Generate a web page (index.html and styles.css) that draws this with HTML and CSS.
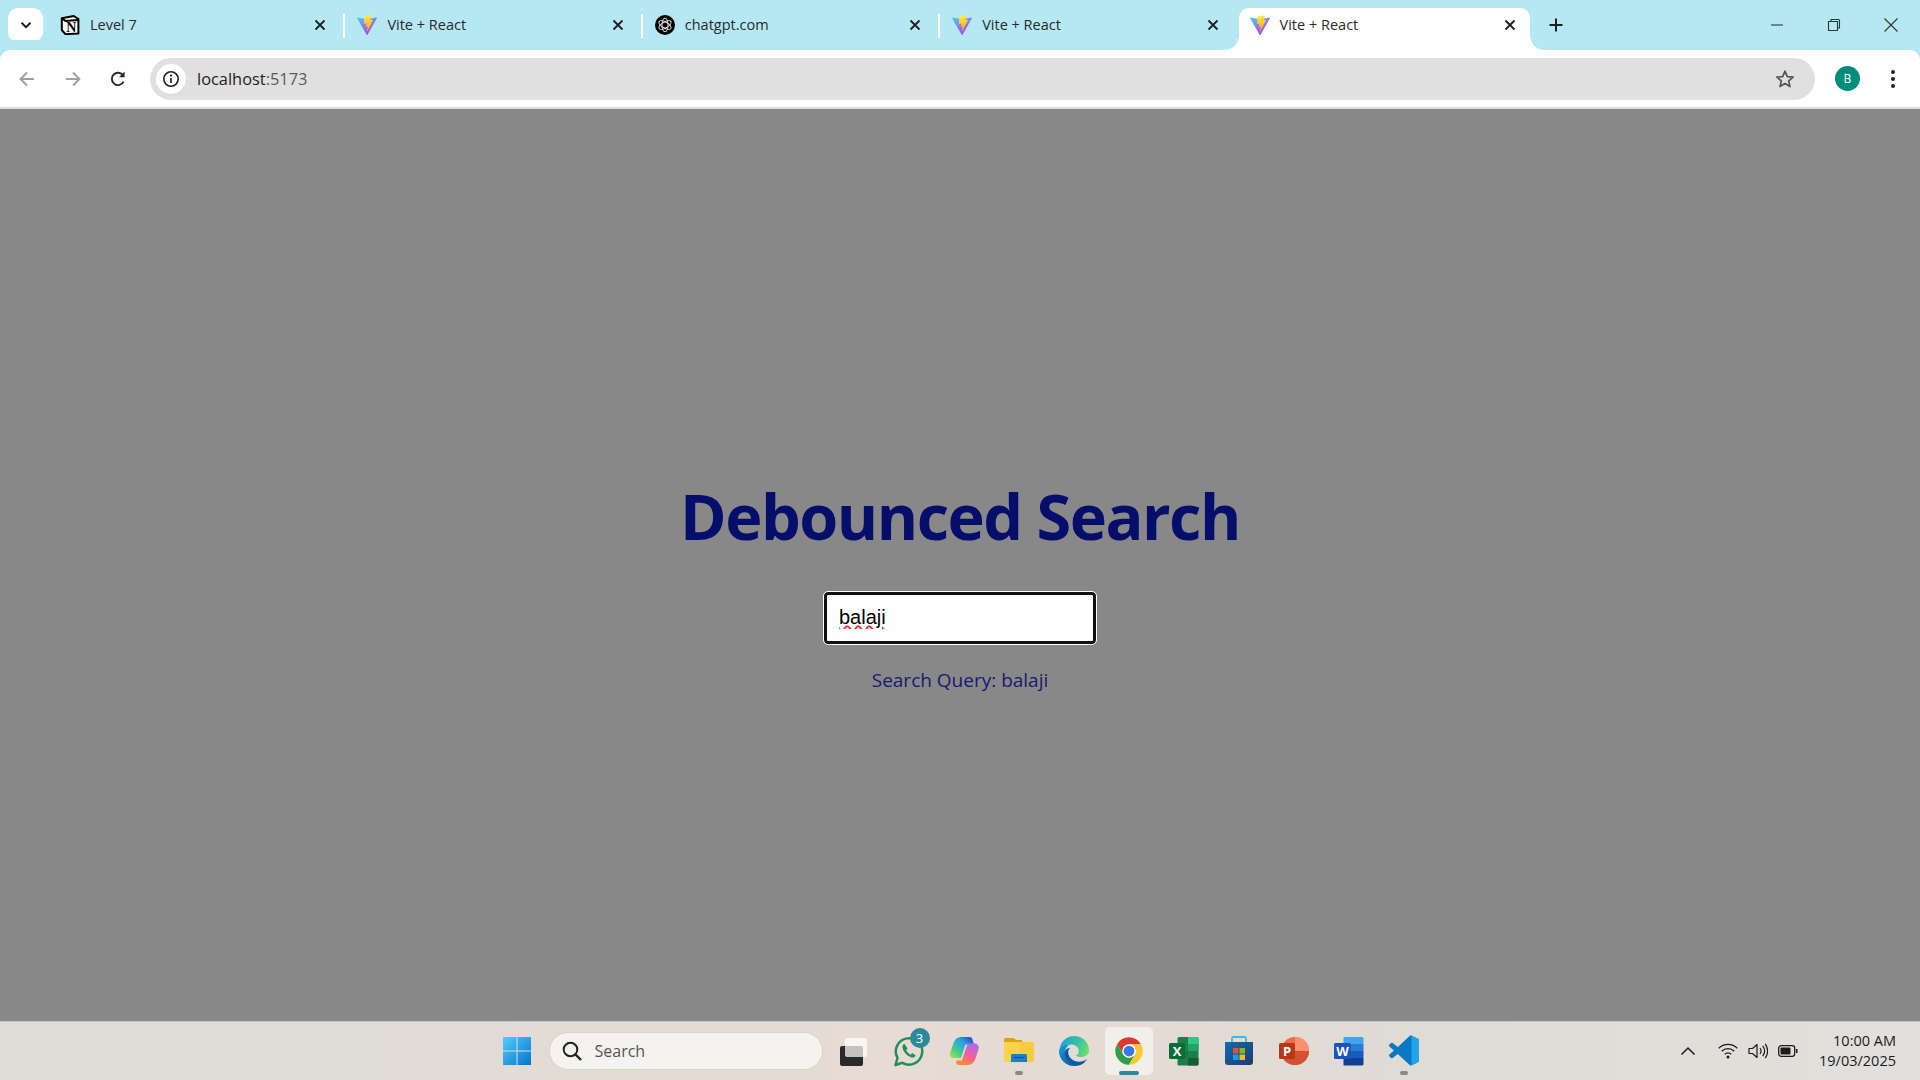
FILE: index.html
```html
<!DOCTYPE html>
<html lang="en">
<head>
    <meta charset="UTF-8">
    <title>Vite + React</title>
    <link rel="stylesheet" href="styles.css">
</head>
<body>

    <svg class="defs" width="0" height="0">
        <defs>
            <linearGradient id="vite-a" x1="0" y1="0" x2="0.6" y2="1">
                <stop offset="0" stop-color="#41d1ff"/>
                <stop offset="1" stop-color="#bd34fe"/>
            </linearGradient>
            <linearGradient id="vite-b" x1="0.4" y1="0" x2="0.5" y2="1">
                <stop offset="0" stop-color="#ffea83"/>
                <stop offset="0.2" stop-color="#ffdd35"/>
                <stop offset="1" stop-color="#ffa800"/>
            </linearGradient>
            <symbol id="vite" viewBox="2 1.4 28 28.6" preserveAspectRatio="none">
                <path fill="url(#vite-a)" d="M29.88 6.15 16.74 29.65c-.27.49-.97.49-1.24 0L2.1 6.15c-.3-.53.15-1.16.75-1.06l13.15 2.35c.08.02.17.02.25 0l12.88-2.35c.6-.1 1.05.53.75 1.06z"/>
                <path fill="url(#vite-b)" d="M22.26 1.48 12.53 3.38a.36.36 0 0 0-.29.33l-.6 10.12c-.01.24.2.42.44.37l2.71-.63c.25-.06.48.17.43.42l-.81 3.95c-.05.26.2.49.46.41l1.67-.51c.26-.08.51.15.45.41l-1.28 6.2c-.08.39.44.6.65.27l.14-.22 7.94-15.84c.13-.27-.1-.57-.39-.51l-2.79.54c-.26.05-.49-.19-.41-.45l1.82-6.32c.07-.25-.15-.5-.41-.45z"/>
            </symbol>
            <symbol id="close" viewBox="0 0 16 16">
                <path d="M3.5 3.5l9 9M12.5 3.5l-9 9" stroke="#1f1f1f" stroke-width="1.8" fill="none"/>
            </symbol>
        </defs>
    </svg>

    <!-- Tab strip -->
    <div class="tabstrip">
        <div class="tab-search">
            <svg width="14" height="14" viewBox="0 0 14 14"><path d="M2.5 4.8 7 9.2l4.5-4.4" stroke="#1f1f1f" stroke-width="2" fill="none"/></svg>
        </div>
        <div class="tab">
            <svg class="favicon" viewBox="0 0 20 20">
                <path d="M1.8 3.2 13.8 1 18.4 4V18.4L5.4 19.2 1.8 15z" fill="#fff" stroke="#000" stroke-width="2" stroke-linejoin="round"/>
                <path d="M2 3.2 5.4 6 18 5" fill="none" stroke="#000" stroke-width="2"/>
                <text x="11.4" y="16.6" class="notion-n">N</text>
            </svg>
            <span class="tab-title">Level 7</span>
            <svg class="tab-close"><use href="#close"/></svg>
        </div>
        <div class="tab">
            <svg class="favicon"><use href="#vite"/></svg>
            <span class="tab-title">Vite + React</span>
            <svg class="tab-close"><use href="#close"/></svg>
        </div>
        <div class="tab">
            <svg class="favicon" viewBox="0 0 20 20">
                <circle cx="10" cy="10" r="10" fill="#000"/>
                <g fill="none" stroke="#d8d8d8" stroke-width="1.1">
                    <ellipse cx="10" cy="10" rx="3" ry="6.8"/>
                    <ellipse cx="10" cy="10" rx="3" ry="6.8" transform="rotate(60 10 10)"/>
                    <ellipse cx="10" cy="10" rx="3" ry="6.8" transform="rotate(120 10 10)"/>
                </g>
            </svg>
            <span class="tab-title">chatgpt.com</span>
            <svg class="tab-close"><use href="#close"/></svg>
        </div>
        <div class="tab">
            <svg class="favicon"><use href="#vite"/></svg>
            <span class="tab-title">Vite + React</span>
            <svg class="tab-close"><use href="#close"/></svg>
        </div>
        <div class="tab active">
            <svg class="favicon"><use href="#vite"/></svg>
            <span class="tab-title">Vite + React</span>
            <svg class="tab-close"><use href="#close"/></svg>
        </div>
        <svg class="new-tab" width="16" height="16" viewBox="0 0 16 16"><path d="M8 1.5v13M1.5 8h13" stroke="#1f1f1f" stroke-width="2"/></svg>
        <div class="window-controls">
            <svg width="16" height="16" viewBox="0 0 16 16"><path d="M2 8h12" stroke="#333" stroke-width="1.1"/></svg>
            <svg width="16" height="16" viewBox="0 0 16 16"><path d="M2.5 4.5h9v9h-9z M5 4.5V2.5h7.5a1 1 0 0 1 1 1V11h-2" fill="none" stroke="#333" stroke-width="1.1"/></svg>
            <svg width="16" height="16" viewBox="0 0 16 16"><path d="M1.5 1.5l13 13M14.5 1.5l-13 13" stroke="#333" stroke-width="1.1"/></svg>
        </div>
    </div>

    <!-- Address bar -->
    <div class="toolbar">
        <div class="nav-buttons">
            <svg width="20" height="20" viewBox="0 0 20 20"><path d="M17 10H4M10 3.5 3.5 10l6.5 6.5" fill="none" stroke="#a0a0a0" stroke-width="1.9"/></svg>
            <svg width="20" height="20" viewBox="0 0 20 20"><path d="M3 10h13M10 3.5l6.5 6.5-6.5 6.5" fill="none" stroke="#a0a0a0" stroke-width="1.9"/></svg>
            <svg width="20" height="20" viewBox="0 0 20 20"><path d="M15.6 12.6a6.2 6.2 0 1 1-.5-6.2" fill="none" stroke="#2b2b2b" stroke-width="1.9"/><path d="M16.6 2.6v5.6H11z" fill="#2b2b2b"/></svg>
        </div>
        <div class="omnibox">
            <div class="site-info">
                <svg width="18" height="18" viewBox="0 0 18 18"><circle cx="9" cy="9" r="7.2" fill="none" stroke="#1f1f1f" stroke-width="1.6"/><path d="M9 8v5" stroke="#1f1f1f" stroke-width="1.7"/><circle cx="9" cy="5.6" r="1.1" fill="#1f1f1f"/></svg>
            </div>
            <span class="url">localhost<span class="url-port">:5173</span></span>
            <svg class="star" width="20" height="20" viewBox="0 0 20 20"><path d="M10 2.2l2.3 5.4 5.8.5-4.4 3.8 1.3 5.7-5-3-5 3 1.3-5.7L1.9 8.1l5.8-.5z" fill="none" stroke="#555" stroke-width="1.7" stroke-linejoin="round"/></svg>
        </div>
        <div class="avatar">B</div>
        <div class="menu-dots"><i></i><i></i><i></i></div>
    </div>

    <!-- Page content -->
    <main class="page">
        <h1>Debounced Search</h1>
        <input class="search-input" type="text" value="balaji" spellcheck="false">
        <p class="search-query">Search Query: balaji</p>
    </main>

    <!-- Windows taskbar -->
    <div class="taskbar">
        <div class="task-icon">
            <svg width="30" height="30" viewBox="0 0 30 30">
                <defs><linearGradient id="win" x1="0" y1="0" x2="1" y2="1"><stop offset="0" stop-color="#4fd0fb"/><stop offset="1" stop-color="#0573cf"/></linearGradient></defs>
                <path fill="url(#win)" d="M1 1h13.5v13.5H1zM15.5 1H29v13.5H15.5zM1 15.5h13.5V29H1zM15.5 15.5H29V29H15.5z"/>
            </svg>
        </div>
        <div class="task-search">
            <svg width="22" height="22" viewBox="0 0 22 22"><circle cx="9.5" cy="9.5" r="6.8" fill="none" stroke="#222" stroke-width="2"/><path d="M14.5 14.5l5.5 5.5" stroke="#222" stroke-width="2.4"/></svg>
            <span>Search</span>
        </div>
        <div class="task-icon">
            <svg width="30" height="30" viewBox="0 0 30 30">
                <rect x="1" y="10" width="23" height="20" rx="2" fill="#2a2a2a"/>
                <rect x="6" y="2" width="22" height="19" rx="2" fill="#fff" fill-opacity="0.72"/>
            </svg>
        </div>
        <div class="task-icon">
            <svg width="32" height="32" viewBox="0 0 32 32">
                <path d="M2.5 30l2-7.2A13.2 13.2 0 1 1 9.4 27.8z" fill="none" stroke="#1f8f5c" stroke-width="2.5" stroke-linejoin="round"/>
                <path d="M11.4 8.8c-1.3.5-2.2 2-1.9 4 .6 4 5 8.8 9 9.6 2.2.4 3.6-.6 4.2-2l-3.4-2.3-1.6 1.6c-1.8-.7-3.8-2.8-4.5-4.6l1.4-1.5z" fill="#1f8f5c"/>
            </svg>
            <span class="task-badge">3</span>
        </div>
        <div class="task-icon">
            <svg width="30" height="28" viewBox="0 0 30 28">
                <defs>
                    <linearGradient id="cp-a" x1="0" y1="1" x2="1" y2="0"><stop offset="0" stop-color="#c4dc40"/><stop offset="0.3" stop-color="#3fd08a"/><stop offset="0.65" stop-color="#2a9fe8"/><stop offset="1" stop-color="#1c3fb8"/></linearGradient>
                    <linearGradient id="cp-b" x1="0.8" y1="0" x2="0.3" y2="1"><stop offset="0" stop-color="#a86cf0"/><stop offset="0.55" stop-color="#f0609c"/><stop offset="1" stop-color="#ff8a30"/></linearGradient>
                </defs>
                <path fill="url(#cp-a)" d="M12 0h8.5c1.4 0 2.4.8 2.8 2l1.7 5.5H16.5L12 21H4.500C1.800 21 .2 18.800 1 16.200L4.500 6C5.800 2.200 8.500 0 12 0z"/>
                <path fill="url(#cp-b)" d="M18.500 6.500h7c2.800 0 4.800 2.200 4.200 5l-3 9.500C25.400 25 23 28 18.500 28H10c-2 0-3.200-1.400-2.800-3l.6-1.500H13z"/>
            </svg>
        </div>
        <div class="task-icon running">
            <svg width="30" height="30" viewBox="0 0 30 30">
                <path d="M0 3.5C0 2.6.7 2 1.5 2H9c.6 0 1 .2 1.400.6L12 4h6v3H0z" fill="#e0a010"/>
                <path d="M0 6h30v20H0z" fill="#fcd24a"/>
                <path d="M15 6h15v20H15z" fill="#f8c53c" opacity="0.6"/>
                <path d="M7 19.5c0-.8.7-1.500 1.500-1.500h13c.8 0 1.500.7 1.500 1.500V26H7z" fill="#1a7ec8"/>
                <path d="M10 21.5h10" stroke="#0d4f94" stroke-width="1.2"/>
            </svg>
        </div>
        <div class="task-icon">
            <svg width="30" height="30" viewBox="0 0 30 30">
                <defs>
                    <linearGradient id="edge-a" x1="0" y1="0" x2="0.6" y2="1"><stop offset="0" stop-color="#16a0dc"/><stop offset="1" stop-color="#0c59a4"/></linearGradient>
                    <linearGradient id="edge-b" x1="0" y1="0.3" x2="1" y2="0.6"><stop offset="0" stop-color="#1aa6e0"/><stop offset="0.55" stop-color="#35c1a2"/><stop offset="1" stop-color="#6fe06a"/></linearGradient>
                </defs>
                <path fill="url(#edge-b)" d="M1 11C3 4 8.500 0 15 0C24 0 30 6.500 30 14.500C30 18.500 26.500 21 22.500 21C20 21 18 20.500 16.900 19.500C18.800 18.500 19.800 17 19.800 15C19.800 11 16 8.500 11.800 8.500C7 8.500 3 10.500 1 14Z"/>
                <path fill="url(#edge-a)" d="M1 12C3 9.500 7 8.500 11.800 8.500C8 9.500 6 12.500 6.500 16.500C7.200 22.500 13 27.500 19 27.500C22 27.500 24.500 26.800 26.500 25.500C23.800 28.500 19.800 30 15 30C6.500 30 0 23 0 15C0 14 .4 13 1 12Z"/>
                <path fill="#0b5aa5" d="M11 12C8.500 14 8.500 19 12 22.500C16 26.500 23 27 28 23C26 27 21 29.500 16 28.500C9 27.500 5 21 6 16C6.500 13.500 8.500 12 11 12Z"/>
            </svg>
        </div>
        <div class="task-icon current">
            <svg width="30" height="30" viewBox="0 0 48 48">
                <path fill="#db3a2e" d="M24 13H43.050A22 22 0 0 0 4.950 13L14.500 29.500 24 24z"/>
                <path fill="#2e9e4c" d="M14.500 29.500 4.950 13A22 22 0 0 0 24 46L33.500 29.500 24 24z"/>
                <path fill="#fcc934" d="M33.500 29.500 24 46A22 22 0 0 0 43.050 13H24V24z"/>
                <circle cx="24" cy="24" r="11" fill="#fff"/>
                <circle cx="24" cy="24" r="8.600" fill="#3b78e7"/>
            </svg>
        </div>
        <div class="task-icon">
            <svg width="30" height="30" viewBox="0 0 30 30">
                <path d="M10 1h18a1.500 1.500 0 0 1 1.500 1.500V28a1.500 1.500 0 0 1-1.500 1.500H10A1.500 1.500 0 0 1 8.500 28V2.500A1.500 1.500 0 0 1 10 1z" fill="#1a7f4b"/>
                <path d="M19 1h9a1.500 1.500 0 0 1 1.500 1.500V8H19z" fill="#33c481"/>
                <path d="M19 8h10.500v7H19z" fill="#21a366"/>
                <path d="M8.500 15H19v7H8.500z" fill="#107c41"/>
                <path d="M19 22h10.500v6a1.500 1.500 0 0 1-1.500 1.500h-9z" fill="#185c37"/>
                <rect x="0" y="7" width="16" height="16" rx="1.500" fill="#0e6b38"/>
                <text x="8" y="20" class="office-letter">X</text>
            </svg>
        </div>
        <div class="task-icon">
            <svg width="30" height="30" viewBox="0 0 30 30">
                <defs><linearGradient id="store" x1="0" y1="0" x2="1" y2="1"><stop offset="0" stop-color="#0f6cb0"/><stop offset="1" stop-color="#1f3a72"/></linearGradient></defs>
                <path d="M8 6V2.500c0-.8.6-1.500 1.500-1.500h11c.9 0 1.500.7 1.500 1.500V6" fill="none" stroke="#33bde8" stroke-width="1.800"/>
                <path d="M1 6h28v20a3 3 0 0 1-3 3H4a3 3 0 0 1-3-3z" fill="url(#store)"/>
                <path d="M9 12h5.500v5.500H9z" fill="#e8502c"/>
                <path d="M15.500 12H21v5.500h-5.500z" fill="#7dba1c"/>
                <path d="M9 18.500h5.500V24H9z" fill="#14a0e8"/>
                <path d="M15.500 18.500H21V24h-5.500z" fill="#fcb814"/>
            </svg>
        </div>
        <div class="task-icon">
            <svg width="30" height="30" viewBox="0 0 30 30">
                <circle cx="16" cy="15" r="14" fill="#ed6c47"/>
                <path d="M16 1a14 14 0 0 1 14 14H16z" fill="#ff8f6b"/>
                <path d="M16 15h14a14 14 0 0 1-14 14 14 14 0 0 1-14-14z" fill="#d35230"/>
                <rect x="0" y="7" width="16" height="16" rx="1.500" fill="#b8371a"/>
                <text x="8" y="20" class="office-letter">P</text>
            </svg>
        </div>
        <div class="task-icon">
            <svg width="30" height="30" viewBox="0 0 30 30">
                <path d="M9.500 1H28a1.500 1.500 0 0 1 1.500 1.500V8h-20z" fill="#41a5ee"/>
                <path d="M9.500 8h20v7h-20z" fill="#2b7cd3"/>
                <path d="M9.500 15h20v7h-20z" fill="#185abd"/>
                <path d="M9.500 22h20v6a1.500 1.500 0 0 1-1.500 1.500H9.500z" fill="#103f91"/>
                <rect x="0" y="7" width="17" height="16" rx="1.500" fill="#1a55b8"/>
                <text x="8.500" y="20" class="office-letter">W</text>
            </svg>
        </div>
        <div class="task-icon running">
            <svg width="30" height="31" viewBox="0 0 100 100">
                <path fill="#0a78c4" d="M70.910 99.320C72.490 99.930 74.280 99.890 75.870 99.130L96.460 89.220C98.620 88.180 100 85.990 100 83.590V16.410C100 14.010 98.620 11.820 96.460 10.780L75.870.87C73.790-.13 71.340.12 69.510 1.450 69.250 1.640 69 1.850 68.770 2.080L29.360 38.040 12.190 25.010C10.590 23.800 8.350 23.900 6.870 25.250L1.360 30.250C-.45 31.910-.45 34.760 1.360 36.420L16.250 50 1.360 63.580C-.45 65.240-.45 68.090 1.360 69.750L6.870 74.750C8.350 76.100 10.590 76.200 12.190 74.990L29.360 61.960 68.770 97.920C69.390 98.540 70.120 99.010 70.910 99.320ZM75.020 27.300 45.110 50 75.020 72.700Z"/>
                <path fill="#1fa4ee" d="M70.910 99.320C72.490 99.930 74.280 99.890 75.870 99.130L96.460 89.220C98.620 88.180 100 85.990 100 83.590V16.410C100 14.010 98.620 11.820 96.460 10.780L75.870.87C73.790-.13 71.340.12 69.510 1.450 72.500-.5 75.020 2 75.020 5V95C75.020 97.500 73 99.500 70.910 99.320Z"/>
            </svg>
        </div>

        <!-- System tray -->
        <div class="tray">
            <svg width="16" height="16" viewBox="0 0 16 16"><path d="M1.500 11.500 8 5l6.500 6.500" fill="none" stroke="#1c1c1c" stroke-width="1.500"/></svg>
            <svg class="tray-wifi" width="20" height="18" viewBox="0 0 20 18"><g fill="none" stroke="#1c1c1c" stroke-width="1.300"><path d="M.8 6.200a13 13 0 0 1 18.400 0"/><path d="M3.800 9.200a8.800 8.800 0 0 1 12.400 0"/><path d="M6.800 12.200a4.500 4.500 0 0 1 6.400 0"/></g><circle cx="10" cy="15" r="1.500" fill="#1c1c1c"/></svg>
            <svg class="tray-volume" width="20" height="18" viewBox="0 0 20 18"><path d="M1 6.500h3.500L9 2.500v13l-4.500-4H1z" fill="none" stroke="#1c1c1c" stroke-width="1.200" stroke-linejoin="round"/><path d="M12 6c1.300 1.800 1.300 4.200 0 6M14.700 3.800c2.400 3.200 2.400 7.200 0 10.400M17.200 1.800c3.200 4.300 3.200 10.100 0 14.400" fill="none" stroke="#1c1c1c" stroke-width="1.200"/></svg>
            <svg class="tray-battery" width="20" height="14" viewBox="0 0 20 14"><rect x=".7" y="1.700" width="16" height="10.600" rx="2.500" fill="none" stroke="#1c1c1c" stroke-width="1.300"/><rect x="2.500" y="3.500" width="10" height="7" rx="1" fill="#1c1c1c"/><path d="M18 5h1.500v4H18z" fill="#1c1c1c"/></svg>
            <div class="clock">
                <span>10:00 AM</span>
                <span>19/03/2025</span>
            </div>
        </div>
    </div>

</body>
</html>
```

FILE: styles.css
```css
* {
    box-sizing: border-box;
}

html, body {
    height: 100%;
}

body {
    margin: 0;
    display: flex;
    flex-direction: column;
    height: 1080px;
    overflow: hidden;
    font-family: "Open Sans", "Noto Sans", sans-serif;
    background-color: #888888;
}

.defs {
    position: absolute;
}

/* Tab strip */
.tabstrip {
    display: flex;
    align-items: flex-end;
    height: 50px;
    padding-left: 8px;
    background-color: #b5e8f3;
    flex-shrink: 0;
}

.tab-search {
    display: flex;
    align-items: center;
    justify-content: center;
    width: 35px;
    height: 34px;
    margin: 0 5px 8px 0;
    background-color: #fff;
    border-radius: 10px;
}

.tab {
    position: relative;
    display: flex;
    align-items: center;
    width: 297.4px;
    height: 42px;
    padding: 0 0 9px 12px;
}

.tab + .tab::before {
    content: "";
    position: absolute;
    left: -2px;
    top: 6px;
    width: 2px;
    height: 24px;
    background-color: #fff;
}

.tab.active {
    width: 291px;
    margin-left: 1px;
    padding-left: 11px;
    background-color: #fff;
    border-radius: 10px 10px 0 0;
}

.tab.active::before {
    left: -14px;
    top: auto;
    bottom: 0;
    width: 14px;
    height: 14px;
    background: radial-gradient(circle at 0 0, #b5e8f3 13.5px, #fff 14px);
}

.tab.active::after {
    content: "";
    position: absolute;
    right: -14px;
    bottom: 0;
    width: 14px;
    height: 14px;
    background: radial-gradient(circle at 100% 0, #b5e8f3 13.5px, #fff 14px);
}

.tab.active .tab-close {
    margin-right: 12px;
}

.favicon {
    width: 20px;
    height: 20px;
    margin-right: 10px;
    flex-shrink: 0;
}

.notion-n {
    font-family: "Liberation Serif", serif;
    font-weight: bold;
    font-size: 14px;
    text-anchor: middle;
    fill: #000;
}

.tab-title {
    flex: 1;
    font-size: 14.5px;
    color: #2a2a2a;
}

.tab-close {
    width: 16px;
    height: 16px;
    margin-right: 17px;
    flex-shrink: 0;
}

.new-tab {
    margin: 0 0 17px 18px;
}

.window-controls {
    display: flex;
    gap: 41px;
    margin: 0 21px 17px auto;
}

/* Address bar */
.toolbar {
    display: flex;
    align-items: center;
    height: 59px;
    background-color: #fff;
    border-bottom: 2px solid #dcdcdc;
    border-radius: 10px 10px 0 0;
    flex-shrink: 0;
    box-shadow: 0 -10px 0 #b5e8f3;
}

.nav-buttons {
    display: flex;
    gap: 25.5px;
    width: 150px;
    padding-left: 17px;
}

.omnibox {
    display: flex;
    align-items: center;
    width: 1665px;
    height: 42px;
    padding-left: 6px;
    background-color: #e0e0e0;
    border-radius: 21px;
}

.site-info {
    display: flex;
    align-items: center;
    justify-content: center;
    width: 30px;
    height: 30px;
    margin-right: 11px;
    background-color: #fff;
    border-radius: 50%;
}

.url {
    flex: 1;
    font-size: 16.4px;
    color: #1f1f1f;
}

.url-port {
    color: #5a5a5a;
}

.star {
    margin-right: 20px;
}

.avatar {
    display: flex;
    align-items: center;
    justify-content: center;
    width: 25px;
    height: 25px;
    margin-left: 20px;
    font-size: 12px;
    color: #fff;
    background-color: #008c7a;
    border-radius: 50%;
}

.menu-dots {
    display: flex;
    flex-direction: column;
    gap: 3px;
    margin-left: 31px;
}

.menu-dots i {
    display: block;
    width: 4px;
    height: 4px;
    background-color: #222;
    border-radius: 50%;
}

/* Page content */
.page {
    flex: 1;
    display: flex;
    flex-direction: column;
    align-items: center;
    justify-content: center;
    padding-top: 37px;
    background-color: #888888;
}

h1 {
    margin: 0 0 33px;
    font-size: 63px;
    line-height: 86px;
    font-weight: 700;
    letter-spacing: -1.5px;
    color: #060e6b;
}

.search-input {
    width: 272px;
    height: 52px;
    padding: 0 12px 2px;
    font-family: "Liberation Sans", Arial, sans-serif;
    font-size: 20px;
    color: #000;
    background-color: #fff;
    border: 3px solid #111;
    border-radius: 4px;
    outline: 1px solid #fff;
    text-decoration: underline wavy #e8303a;
}

.search-query {
    margin: 22px 0 0;
    font-size: 19px;
    line-height: 28px;
    color: #191970;
}

/* Taskbar */
.taskbar {
    display: flex;
    align-items: center;
    height: 59px;
    padding: 0 0 1px 489.5px;
    border-top: 1px solid #c8c4be;
    background: linear-gradient(90deg, #dedcd5 0%, #e0dcd5 25%, #e7dbd3 45%, #e5dbd3 58%, #dedcd5 75%, #e2e0dc 100%);
    flex-shrink: 0;
}

.task-icon {
    position: relative;
    display: flex;
    align-items: center;
    justify-content: center;
    width: 55px;
    height: 48px;
}

.task-icon.running::after,
.task-icon.current::after {
    content: "";
    position: absolute;
    left: 50%;
    bottom: 0;
    width: 8px;
    height: 4px;
    margin-left: -4px;
    background-color: #8a8985;
    border-radius: 2px;
}

.task-icon.current::before {
    content: "";
    position: absolute;
    left: 3.5px;
    top: 0;
    width: 48px;
    height: 48px;
    background-color: #f1efe9;
    border-radius: 5px;
}

.task-icon.current svg {
    position: relative;
}

.task-icon.current::after {
    width: 20px;
    margin-left: -10px;
    background-color: #2a8a9c;
}

.task-badge {
    position: absolute;
    left: 28px;
    top: 1px;
    width: 20px;
    height: 20px;
    font-size: 13px;
    line-height: 20px;
    text-align: center;
    color: #fff;
    background-color: #2a8a9c;
    border-radius: 50%;
}

.task-search {
    display: flex;
    align-items: center;
    width: 274px;
    height: 38px;
    padding-left: 11px;
    margin: 0 4px;
    background-color: #f5f3ef;
    border: 1px solid #d8d4cc;
    border-radius: 19px;
}

.task-search span {
    margin-left: 12px;
    font-size: 16px;
    color: #555;
}

.office-letter {
    font-family: "Open Sans", sans-serif;
    font-size: 13px;
    font-weight: 700;
    text-anchor: middle;
    fill: #fff;
}

.tray {
    display: flex;
    align-items: center;
    margin-left: auto;
    padding-right: 24px;
}

.tray-wifi {
    margin-left: 22px;
}

.tray-volume {
    margin-left: 10px;
}

.tray-battery {
    margin-left: 10px;
}

.clock {
    display: flex;
    flex-direction: column;
    align-items: flex-end;
    margin-left: 21px;
    font-size: 14.5px;
    line-height: 20px;
    color: #1c1c1c;
}
```
